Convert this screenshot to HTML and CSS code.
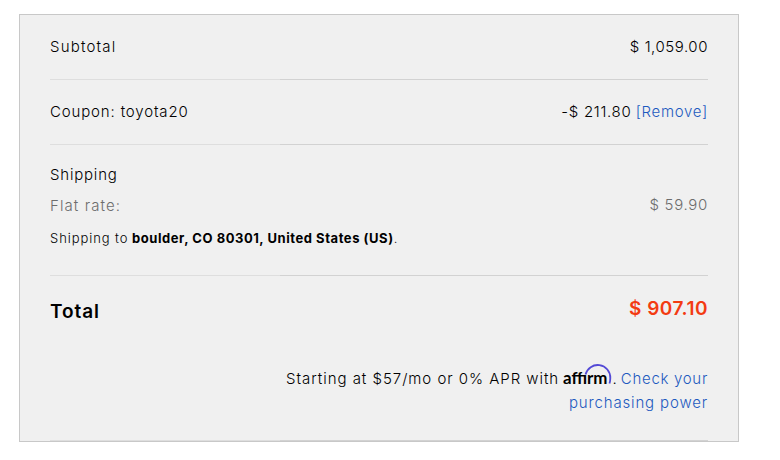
FILE: index.html
```html
<!DOCTYPE html>
<html lang="en">
<head>
    <meta charset="UTF-8">
    <meta name="viewport" content="width=device-width, initial-scale=1.0">
    <title>Cart totals</title>
    <link rel="stylesheet" href="styles.css">
</head>
<body>
    <div class="cart-totals">
        <div class="row">
            <div class="label subtotal">Subtotal</div>
            <div class="value amount">$ 1,059.00</div>
        </div>
        <div class="row">
            <div class="label coupon">Coupon: toyota20</div>
            <div class="value"><span class="discount">-$ 211.80</span> <a href="#" class="remove">[Remove]</a></div>
        </div>
        <div class="row shipping">
            <div class="label">
                <div class="shipping-title">Shipping</div>
                <div class="method">Flat rate:</div>
                <div class="destination"><span class="to">Shipping to</span> <strong>boulder, CO 80301, United States (US)</strong>.</div>
            </div>
            <div class="value rate">$ 59.90</div>
        </div>
        <div class="row total">
            <div class="label">Total</div>
            <div class="value">
                <div class="grand-total">$ 907.10</div>
                <p class="affirm"><span class="offer">Starting at $57/mo or 0% APR with</span> <svg class="affirm-logo" width="49" height="24" viewBox="0 0 49 24">
                    <text x="0" y="20" textLength="44.5" lengthAdjust="spacingAndGlyphs">affırm</text>
                    <path d="M22.5 10.5A12.6 12.6 0 0 1 47.3 14Q47.3 17 46.5 19.5"/>
                </svg>. <a href="#">Check your<br><span class="power">purchasing power</span></a></p>
            </div>
        </div>
    </div>
</body>
</html>
```
FILE: styles.css
```css
* {
    box-sizing: border-box;
}
body {
    margin: 0;
    padding: 14px 41px 0 19px;
    background: #fff;
    color: #000;
    font-family: Inter, sans-serif;
    font-size: 15px;
    font-weight: 300;
    line-height: 24px;
}
.cart-totals {
    width: 720px;
    height: 428px;
    padding: 0 30px;
    background: #f0f0f0;
    border: 1px solid #c8c8c8;
}
.row {
    display: flex;
    justify-content: space-between;
    height: 65px;
    padding-top: 20px;
    background: linear-gradient(to right, #dedede 230px, #d2d2d2 230px) bottom / 100% 1px no-repeat;
}
.label,
.value {
    white-space: nowrap;
}
.value {
    text-align: right;
}
a {
    color: #1d5abf;
    text-decoration: none;
    letter-spacing: 0.7px;
}
.subtotal {
    letter-spacing: 1.2px;
}
.amount {
    letter-spacing: 0.55px;
}
.coupon {
    letter-spacing: 0.85px;
}
.discount {
    letter-spacing: 0.7px;
}
.shipping {
    height: 131px;
    padding-top: 18px;
}
.shipping-title {
    letter-spacing: 0.8px;
}
.method {
    margin-top: 7px;
    color: #6d6d6d;
    letter-spacing: 1.1px;
}
.rate {
    padding-top: 30px;
    color: #6d6d6d;
    letter-spacing: 0.7px;
}
.destination {
    margin-top: 8px;
    font-size: 13px;
}
.to {
    letter-spacing: 0.93px;
}
.destination strong {
    font-weight: 700;
    letter-spacing: 0.55px;
}
.total {
    height: 165px;
    padding-top: 24px;
}
.total > .label {
    font-size: 19px;
    font-weight: 600;
    letter-spacing: 0.9px;
}
.grand-total {
    margin-top: -3px;
    color: #f33b12;
    font-size: 19px;
    font-weight: 600;
    letter-spacing: 0.5px;
}
.affirm {
    margin: 43px 0 0;
}
.offer {
    letter-spacing: 0.96px;
}
.power {
    letter-spacing: 0.85px;
}
.affirm-logo {
    height: 24px;
    vertical-align: -4px;
    overflow: visible;
}
.affirm-logo text {
    font-family: Lato, sans-serif;
    font-size: 17px;
    font-weight: 700;
}
.affirm-logo path {
    fill: none;
    stroke: #5349d6;
    stroke-width: 1.8;
}
```
